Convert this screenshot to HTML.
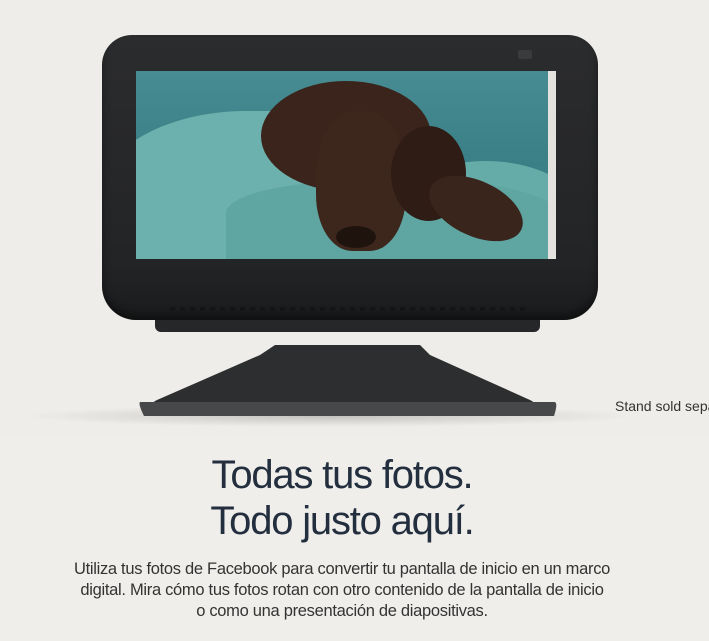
<!DOCTYPE html>
<html><head><meta charset="utf-8"><style>
html,body{margin:0;padding:0;width:709px;height:641px;overflow:hidden;background:#efeeeb;font-family:"Liberation Sans",sans-serif}
#wrap{position:relative;width:709px;height:641px;overflow:hidden}
.abs{position:absolute}
#dev{left:102px;top:35px;width:496px;height:285px;border-radius:30px 30px 34px 34px;background:linear-gradient(#2b2c2e,#232426 80%,#1a1b1c);box-shadow:inset 0 -6px 8px rgba(0,0,0,.4)}
#scr{left:136px;top:71px;width:420px;height:188px;overflow:hidden;background:#3e8389}
.gr{position:absolute}
</style></head><body><div id="wrap">
<div class="abs" style="left:0;top:0;width:709px;height:435px;background:#eeede9"></div>
<div class="abs" style="left:20px;top:405px;width:620px;height:22px;border-radius:50%;background:radial-gradient(ellipse at center,rgba(0,0,0,.18),rgba(0,0,0,0) 70%)"></div>
<svg class="abs" style="left:130px;top:300px" width="440" height="120">
<path d="M145 45 L290 45 L300 55 L400 100 Q415 108 405 112 L22 112 Q12 108 27 100 L130 55 Z" fill="#2d2e30"/>
<path d="M10 102 L425 102 Q428 104 424 116 L14 116 Q8 104 10 102Z" fill="#47484a"/>
</svg>
<div class="abs" style="left:155px;top:310px;width:385px;height:22px;background:#262729;border-radius:0 0 6px 6px"></div>
<div class="abs" id="dev"></div>
<div class="abs" style="left:170px;top:307px;width:360px;height:4px;background:repeating-linear-gradient(90deg,#151516 0 5px,transparent 5px 10px)"></div>
<div class="abs" style="left:518px;top:50px;width:14px;height:9px;background:#3a3b3d;border-radius:2px"></div>
<div class="abs" id="scr">
 <div class="gr" style="left:0;top:0;width:420px;height:188px;background:linear-gradient(180deg,#478c92,#3a7f86 50%,#4a9596)"></div>
 <div class="gr" style="left:-40px;top:40px;width:300px;height:180px;border-radius:50% 40% 0 0;background:#6cb1ad"></div>
 <div class="gr" style="left:250px;top:90px;width:200px;height:120px;border-radius:50% 50% 0 0;background:#65aba8"></div>
 <div class="gr" style="left:90px;top:110px;width:330px;height:80px;background:#5fa6a3;border-radius:40% 40% 0 0"></div>
 <div class="gr" style="left:125px;top:10px;width:170px;height:110px;border-radius:50%;background:#3a241b"></div>
 <div class="gr" style="left:180px;top:40px;width:90px;height:140px;border-radius:45% 45% 40% 40%;background:#3d271d"></div>
 <div class="gr" style="left:255px;top:55px;width:75px;height:95px;border-radius:50%;background:#2e1c15"></div>
 <div class="gr" style="left:290px;top:110px;width:100px;height:55px;border-radius:50%;background:#3a251c;transform:rotate(25deg)"></div>
 <div class="gr" style="left:200px;top:155px;width:40px;height:22px;border-radius:50%;background:#1f130e"></div>
 <div class="gr" style="left:412px;top:0;width:8px;height:188px;background:#e4e2de"></div>
</div>
<div class="abs" style="left:615px;top:398px;width:94px;overflow:hidden;font-size:14px;color:#333;white-space:nowrap">Stand sold separately</div>
<div class="abs" style="left:0;top:452px;width:684px;text-align:center;color:#232f3e;font-size:40px;line-height:46px;letter-spacing:-1.2px">Todas tus fotos.<br>Todo justo aquí.</div>
<div class="abs" style="left:30px;top:559px;width:624px;text-align:center;color:#333;font-size:16.5px;line-height:21px;letter-spacing:-.3px">Utiliza tus fotos de Facebook para convertir tu pantalla de inicio en un marco<br>digital. Mira cómo tus fotos rotan con otro contenido de la pantalla de inicio<br>o como una presentación de diapositivas.</div>
</div></body></html>
